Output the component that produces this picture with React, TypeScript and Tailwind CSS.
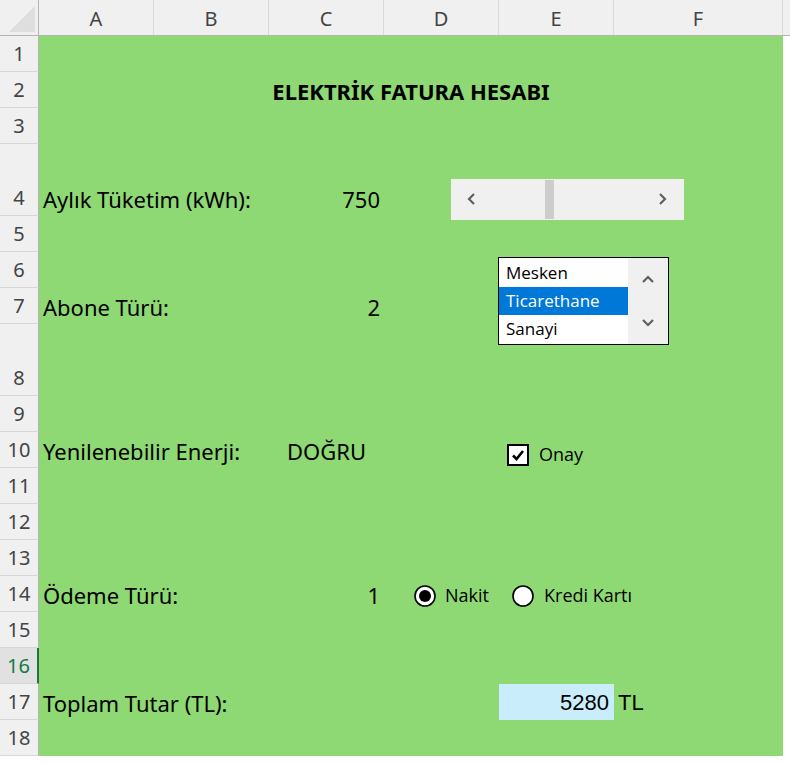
import type { ReactNode } from 'react';

// ---------------------------------------------------------------------------
// Sheet geometry
// ---------------------------------------------------------------------------

const COLUMNS = [
  { name: 'A', w: 'w-[115px]' },
  { name: 'B', w: 'w-[115px]' },
  { name: 'C', w: 'w-[115px]' },
  { name: 'D', w: 'w-[115px]' },
  { name: 'E', w: 'w-[115px]' },
  { name: 'F', w: 'w-[169px]' },
];

const ROWS = [1, 2, 3, 4, 5, 6, 7, 8, 9, 10, 11, 12, 13, 14, 15, 16, 17, 18];
const TALL_ROWS = [4, 8];

const SHEET_FONT = "font-['Noto_Sans',sans-serif]";
const CONTROL_FONT = "font-['Open_Sans',sans-serif]";

// ---------------------------------------------------------------------------
// Small drawings
// ---------------------------------------------------------------------------

function Chevron({ dir }: { dir: 'left' | 'right' | 'up' | 'down' }) {
  const d = {
    left: 'M7 1 L2 6 L7 11',
    right: 'M2 1 L7 6 L2 11',
    up: 'M1 7 L6 2 L11 7',
    down: 'M1 2 L6 7 L11 2',
  }[dir];
  const horiz = dir === 'left' || dir === 'right';
  return (
    <svg
      aria-hidden="true"
      viewBox={horiz ? '0 0 9 12' : '0 0 12 9'}
      className={horiz ? 'h-[12px] w-[9px]' : 'h-[9px] w-[12px]'}
      fill="none"
      stroke="#606060"
      strokeWidth="2.2"
    >
      <path d={d} />
    </svg>
  );
}

function Radio({ checked }: { checked: boolean }) {
  return (
    <svg aria-hidden="true" viewBox="0 0 22 22" className="h-[22px] w-[22px]">
      <circle cx="11" cy="11" r="10" fill="white" stroke="black" strokeWidth="1.6" />
      {checked && <circle cx="11" cy="11" r="6" fill="black" />}
    </svg>
  );
}

function CheckBox() {
  return (
    <div className="flex h-[22px] w-[22px] items-center justify-center border-2 border-black bg-white">
      <svg aria-hidden="true" viewBox="0 0 14 14" className="h-[14px] w-[14px]">
        <path d="M2 7.5 L5.5 11 L12 3" fill="none" stroke="black" strokeWidth="2.6" />
      </svg>
    </div>
  );
}

// ---------------------------------------------------------------------------
// A cell of the green block (bottom aligned like Excel)
// ---------------------------------------------------------------------------

function Cell({ className, children }: { className: string; children: ReactNode }) {
  return (
    <div className={`flex items-end pb-[3px] text-[22px] leading-[28px] text-black ${className}`}>
      {children}
    </div>
  );
}

export default function App() {
  return (
    <div className={`relative h-[763px] w-[790px] overflow-hidden bg-white ${SHEET_FONT}`}>
      {/* Column header strip */}
      <div className="flex h-[36px] border-b border-[#b4b4b4] bg-[#f0f0f0]">
        <div className="relative w-[39px] border-r border-[#b4b4b4]">
          <svg aria-hidden="true" viewBox="0 0 39 35" className="absolute inset-0 h-[35px] w-[39px]">
            <polygon points="35,6 35,32 9,32" fill="#dedede" />
          </svg>
        </div>
        {COLUMNS.map((c) => (
          <div
            key={c.name}
            className={`${c.w} flex items-center justify-center border-r border-[#d9d9d9] pt-[2px] text-[20px] text-[#444444]`}
          >
            {c.name}
          </div>
        ))}
        <div className="flex-1" />
      </div>

      <div className="flex">
        {/* Row header strip */}
        <div className="flex w-[39px] flex-col">
          {ROWS.map((r) => {
            const tall = TALL_ROWS.includes(r);
            const active = r === 16;
            return (
              <div
                key={r}
                className={[
                  'flex items-end justify-center border-b border-[#d6d6d6] pb-[3px] text-[20px] leading-[28px]',
                  tall ? 'h-[72px]' : 'h-[36px]',
                  active
                    ? 'border-r-2 border-r-[#217346] bg-[#e1e1e1] text-[#107c41]'
                    : 'border-r border-r-[#b4b4b4] bg-[#f0f0f0] text-[#444444]',
                ].join(' ')}
              >
                {r}
              </div>
            );
          })}
        </div>

        {/* Filled sheet block */}
        <div className="relative grid h-[720px] w-[744px] grid-cols-[115px_115px_115px_115px_115px_169px] grid-rows-[36px_36px_36px_72px_36px_36px_36px_72px_36px_36px_36px_36px_36px_36px_36px_36px_36px_36px] bg-[#8ed973]">
          <Cell className="col-span-6 col-start-1 row-start-2 justify-center font-bold">
            ELEKTRİK FATURA HESABI
          </Cell>

          <Cell className="col-span-2 col-start-1 row-start-4 pl-[4px] whitespace-nowrap">Aylık Tüketim (kWh):</Cell>
          <Cell className="col-start-3 row-start-4 justify-end pr-[4px]">750</Cell>

          <Cell className="col-span-2 col-start-1 row-start-7 pl-[4px]">Abone Türü:</Cell>
          <Cell className="col-start-3 row-start-7 justify-end pr-[4px]">2</Cell>

          <Cell className="col-span-2 col-start-1 row-start-10 pl-[4px] whitespace-nowrap">Yenilenebilir Enerji:</Cell>
          <Cell className="col-start-3 row-start-10 justify-center">DOĞRU</Cell>

          <Cell className="col-span-2 col-start-1 row-start-14 pl-[4px]">Ödeme Türü:</Cell>
          <Cell className="col-start-3 row-start-14 justify-end pr-[4px]">1</Cell>

          <Cell className="col-span-2 col-start-1 row-start-17 pl-[4px]">Toplam Tutar (TL):</Cell>
          <div className="col-start-5 row-start-17 flex items-center justify-end bg-[#caedfb] pr-[5px] font-['Liberation_Sans',sans-serif] text-[22px] text-black">
            5280
          </div>
          <div className="col-start-6 row-start-17 flex items-center pl-[4px] font-['Liberation_Sans',sans-serif] text-[22px] text-black">
            TL
          </div>

          {/* Scroll bar form control */}
          <div className="absolute left-[412px] top-[143px] flex h-[41px] w-[233px] items-center bg-[#f0f0f0]">
            <span className="absolute left-[16px] top-[14px]">
              <Chevron dir="left" />
            </span>
            <span className="absolute left-[94px] top-[1px] h-[39px] w-[9px] bg-[#cdcdcd]" />
            <span className="absolute left-[207px] top-[14px]">
              <Chevron dir="right" />
            </span>
          </div>

          {/* List box form control */}
          <div className={`absolute left-[459px] top-[221px] flex h-[88px] w-[171px] border border-black bg-white ${CONTROL_FONT}`}>
            <ul className="m-0 flex w-[129px] list-none flex-col p-0 pt-[1px] text-[17px] leading-[28px]">
              <li className="pl-[7px] text-black">Mesken</li>
              <li className="bg-[#0078d7] pl-[7px] text-white">Ticarethane</li>
              <li className="pl-[7px] text-black">Sanayi</li>
            </ul>
            <div className="flex flex-1 flex-col items-center justify-between bg-[#f0f0f0] py-[17px]">
              <Chevron dir="up" />
              <Chevron dir="down" />
            </div>
          </div>

          {/* Check box */}
          <div className={`absolute left-[468px] top-[405px] flex items-center gap-[10px] text-[18px] text-black ${CONTROL_FONT}`}>
            <CheckBox />
            <span>Onay</span>
          </div>

          {/* Option buttons */}
          <div className={`absolute left-[375px] top-[546px] flex items-center gap-[9px] text-[18px] text-black ${CONTROL_FONT}`}>
            <Radio checked />
            <span>Nakit</span>
          </div>
          <div className={`absolute left-[473px] top-[546px] flex items-center gap-[10px] text-[18px] text-black ${CONTROL_FONT}`}>
            <Radio checked={false} />
            <span>Kredi Kartı</span>
          </div>
        </div>
      </div>
    </div>
  );
}
